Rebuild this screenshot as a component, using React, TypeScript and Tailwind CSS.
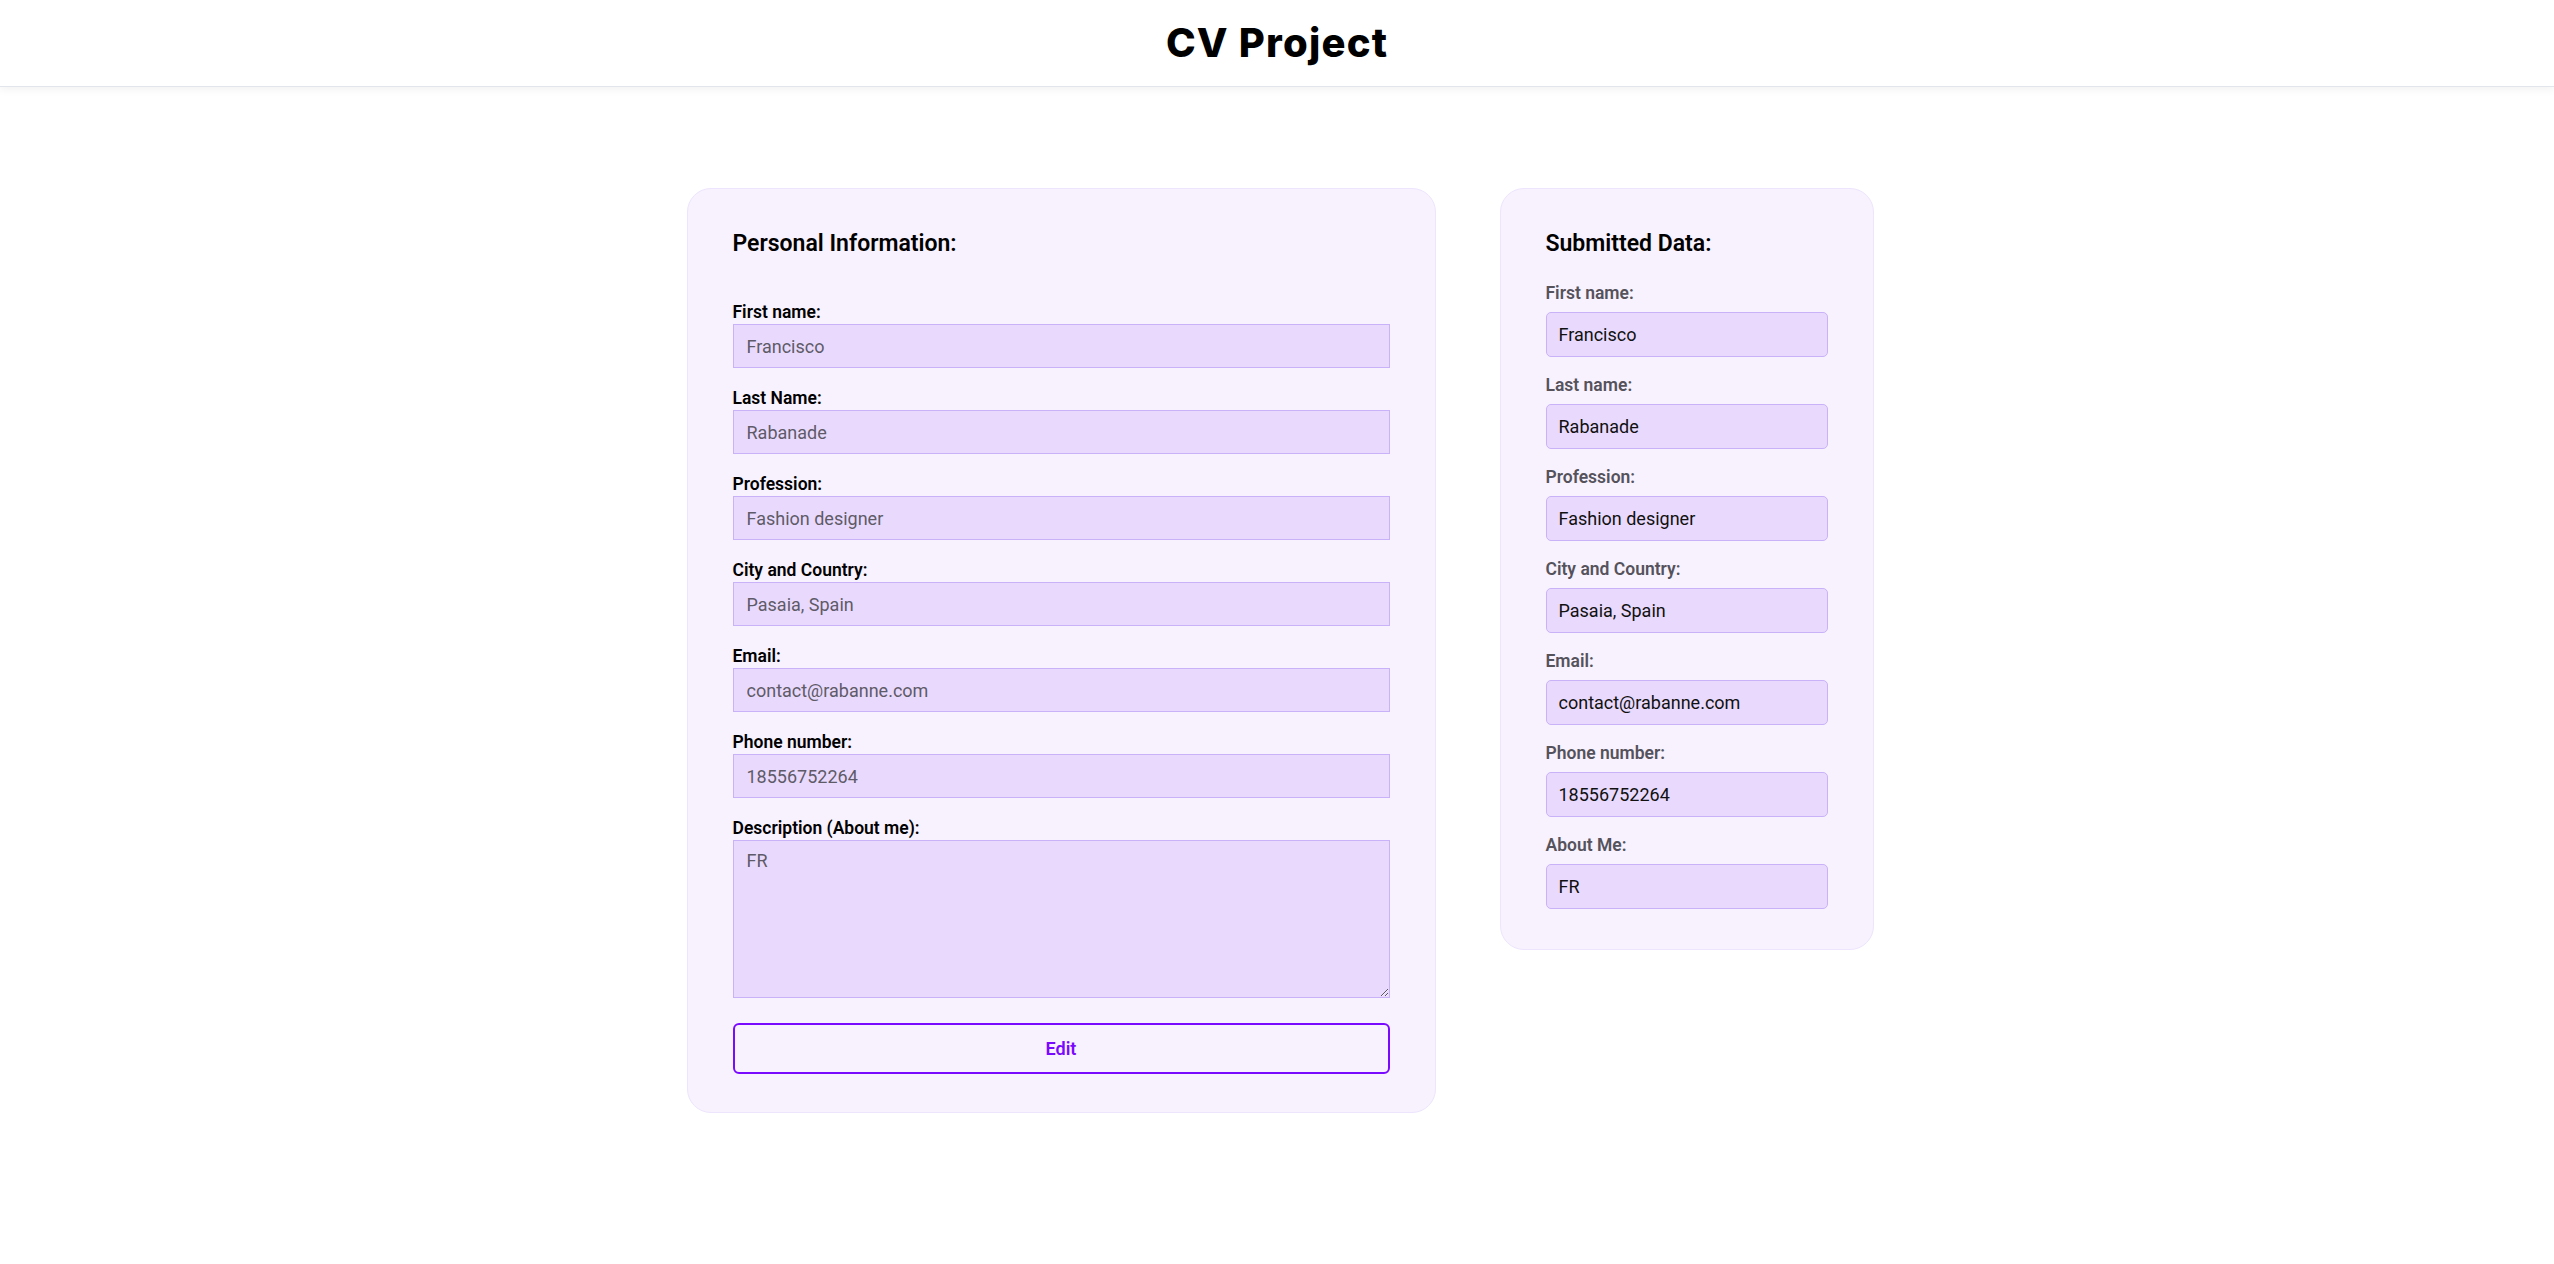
import React from "react";

const fields = [
  { label: "First name:", value: "Francisco" },
  { label: "Last Name:", value: "Rabanade" },
  { label: "Profession:", value: "Fashion designer" },
  { label: "City and Country:", value: "Pasaia, Spain" },
  { label: "Email:", value: "contact@rabanne.com" },
  { label: "Phone number:", value: "18556752264" },
];

const submitted = [
  { label: "First name:", value: "Francisco" },
  { label: "Last name:", value: "Rabanade" },
  { label: "Profession:", value: "Fashion designer" },
  { label: "City and Country:", value: "Pasaia, Spain" },
  { label: "Email:", value: "contact@rabanne.com" },
  { label: "Phone number:", value: "18556752264" },
  { label: "About Me:", value: "FR" },
];

export default function App() {
  return (
    <div
      className="min-h-screen bg-white text-black"
      style={{ fontFamily: "Roboto, 'Liberation Sans', sans-serif" }}
    >
      <header className="h-[87px] flex items-center justify-center bg-white border-b border-[#e2e6ec] shadow-[0_3px_8px_rgba(0,0,0,0.05)]">
        <h1
          className="text-[40px] font-extrabold tracking-[0.03em] leading-none text-black"
          style={{ fontFamily: "Inter, sans-serif" }}
        >
          CV Project
        </h1>
      </header>

      <main className="flex justify-center items-start gap-16 pt-[101px] pl-[6px]">
        {/* Left card */}
        <section className="w-[749px] bg-[#f8f2fe] border border-[#ede4fd] rounded-[24px] px-[45px] pt-[41px] pb-[38px]">
          <h2 className="text-[23px] leading-[28px] font-semibold mb-[42px]">Personal Information:</h2>
          <form className="flex flex-col">
            {fields.map((f) => (
              <div key={f.label} className="flex flex-col mb-[18px]">
                <label className="text-[17.5px] leading-[24px] font-semibold text-black">{f.label}</label>
                <input
                  readOnly
                  defaultValue={f.value}
                  className="h-[44px] w-full bg-[#e9dafd] border border-[#c9b2f8] px-[13px] text-[18px] text-[#5f5a68] outline-none"
                />
              </div>
            ))}
            <div className="flex flex-col">
              <label className="text-[17.5px] leading-[24px] font-semibold text-black">Description (About me):</label>
              <textarea
                readOnly
                defaultValue="FR"
                className="block h-[158px] w-full bg-[#e9dafd] border border-[#c9b2f8] px-[13px] py-2 text-[18px] leading-[24px] text-[#5f5a68] outline-none"
              />
            </div>
            <button
              type="button"
              className="mt-[25px] h-[51px] w-full rounded-[6px] border-2 border-[#7a0afe] text-[#7a0afe] text-[18px] font-semibold bg-transparent"
            >
              Edit
            </button>
          </form>
        </section>

        {/* Right card */}
        <section className="w-[374px] bg-[#f8f2fe] border border-[#ede4fd] rounded-[24px] px-[45px] pt-[41px] pb-[40px]">
          <h2 className="text-[23px] leading-[28px] font-semibold mb-[23px]">Submitted Data:</h2>
          <div className="flex flex-col gap-[16px]">
            {submitted.map((s) => (
              <div key={s.label} className="flex flex-col">
                <span className="text-[17.5px] leading-[24px] font-semibold text-[#55525c]">{s.label}</span>
                <div className="mt-[7px] h-[45px] flex items-center rounded-[5px] bg-[#e9dafd] border border-[#c9b2f8] px-[12px] text-[18px] text-[#111111]">
                  {s.value}
                </div>
              </div>
            ))}
          </div>
        </section>
      </main>
    </div>
  );
}
